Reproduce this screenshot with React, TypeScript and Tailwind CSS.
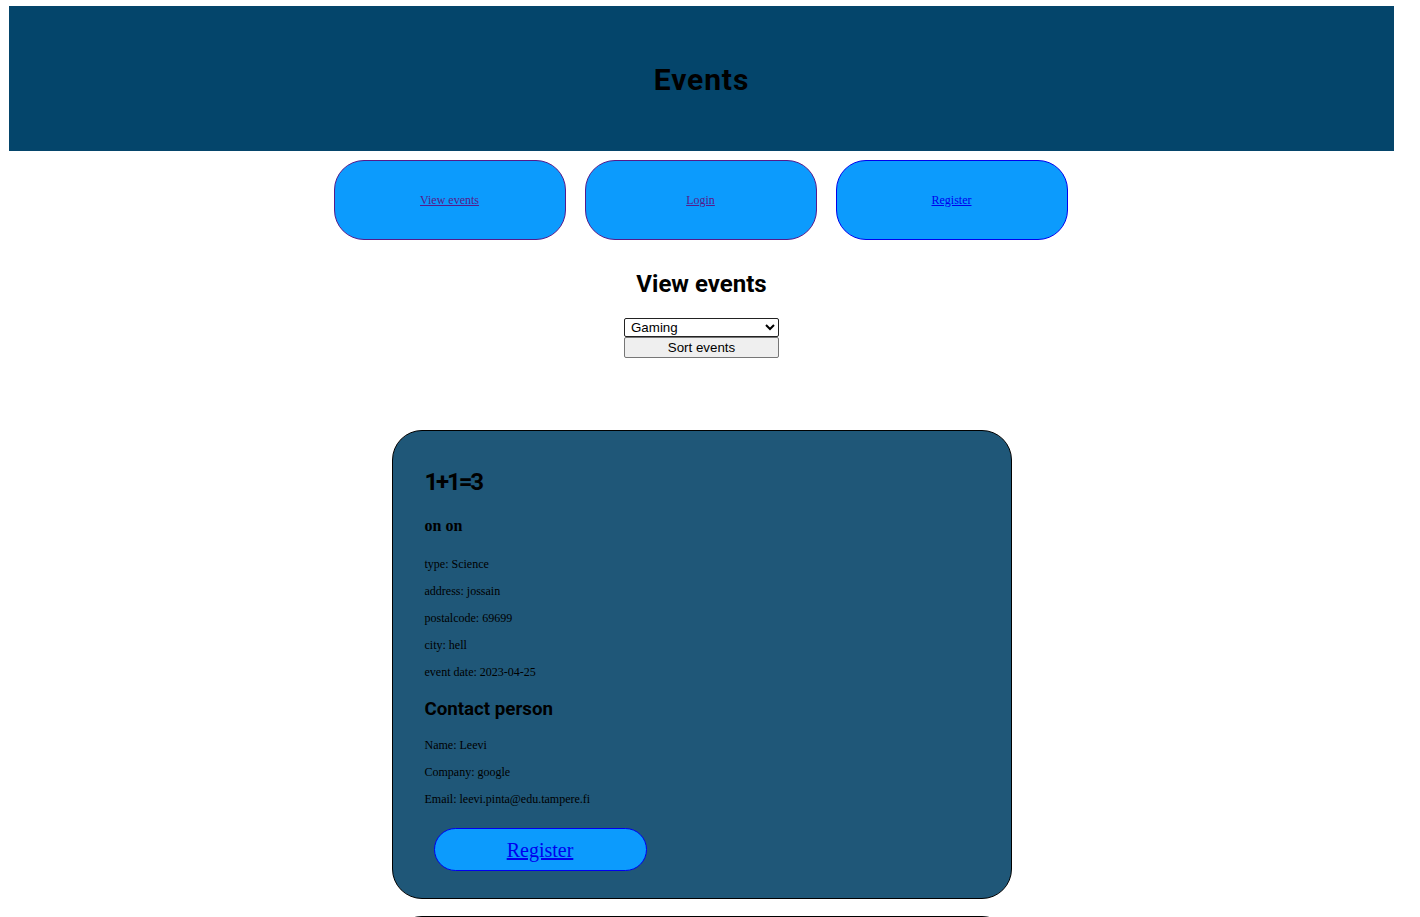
const navLinks: ReadonlyArray<{ label: string; visited: boolean }> = [
  { label: "View events", visited: true },
  { label: "Login", visited: true },
  { label: "Register", visited: false },
];

type EventItem = {
  title: string;
  subtitle: string;
  type: string;
  address: string;
  postalcode: string;
  city: string;
  date: string;
  name: string;
  company: string;
  email: string;
};

const events: ReadonlyArray<EventItem> = [
  {
    title: "1+1=3",
    subtitle: "on on",
    type: "Science",
    address: "jossain",
    postalcode: "69699",
    city: "hell",
    date: "2023-04-25",
    name: "Leevi",
    company: "google",
    email: "leevi.pinta@edu.tampere.fi",
  },
  {
    title: "LAN party",
    subtitle: "bring your own computer",
    type: "Gaming",
    address: "Kalevantie 4",
    postalcode: "33100",
    city: "Tampere",
    date: "2023-05-12",
    name: "Leevi",
    company: "google",
    email: "leevi.pinta@edu.tampere.fi",
  },
];

const heading = "font-['Roboto',sans-serif] font-bold text-black";

const EventCard = ({ ev }: { ev: EventItem }): JSX.Element => {
  const details = [
    `type: ${ev.type}`,
    `address: ${ev.address}`,
    `postalcode: ${ev.postalcode}`,
    `city: ${ev.city}`,
    `event date: ${ev.date}`,
  ];
  const contact = [`Name: ${ev.name}`, `Company: ${ev.company}`, `Email: ${ev.email}`];

  return (
    <div className="mx-auto w-[620px] rounded-[30px] border border-black bg-[#1f5778] pt-[37px] pb-[27px] pl-[32px] pr-[32px] text-black">
      <h2 className={`${heading} text-[24px] leading-[28px] tracking-[-0.09em]`}>{ev.title}</h2>
      <h4 className="mt-[21px] font-['Liberation_Serif',serif] text-[16px] leading-[18px] font-bold">
        {ev.subtitle}
      </h4>
      <div className="mt-[22px] flex flex-col gap-[13px] font-['Liberation_Serif',serif] text-[12px] leading-[14px]">
        {details.map((d) => (
          <p key={d}>{d}</p>
        ))}
      </div>
      <h3 className={`${heading} mt-[19px] text-[18.72px] leading-[22px]`}>Contact person</h3>
      <div className="mt-[18px] flex flex-col gap-[13px] font-['Liberation_Serif',serif] text-[12px] leading-[14px]">
        {contact.map((c) => (
          <p key={c}>{c}</p>
        ))}
      </div>
      <a
        href="#"
        className="mt-[22px] ml-[9px] flex h-[43px] w-[213px] items-center justify-center rounded-full border border-[#0000ee] bg-[#0c9bfd] font-['Liberation_Serif',serif] text-[20px] text-[#0000ee] underline"
      >
        Register
      </a>
    </div>
  );
};

const App = (): JSX.Element => {
  return (
    <div className="min-h-screen bg-white pl-[9px] pr-[26px] pt-[6px] pb-[40px]">
      <header className="flex h-[145px] items-center justify-center bg-[#04456b] pt-[3px]">
        <h1 className={`${heading} text-[30px] leading-[34px] tracking-[0.03em]`}>Events</h1>
      </header>

      <nav className="mt-[9px] flex justify-center gap-[19px] pr-[2px]">
        {navLinks.map((link) => (
          <div
            key={link.label}
            className={`flex h-[80px] w-[232px] items-center justify-center rounded-[30px] border bg-[#0c9bfd] ${
              link.visited ? "border-[#551a8b]" : "border-[#0000ee]"
            }`}
          >
            <a
              href="#"
              className={`font-['Liberation_Serif',serif] text-[12px] underline ${
                link.visited ? "text-[#551a8b]" : "text-[#0000ee]"
              }`}
            >
              {link.label}
            </a>
          </div>
        ))}
      </nav>

      <h2 className={`${heading} mt-[30px] text-center text-[24px] leading-[28px]`}>View events</h2>

      <div className="mt-[20px] flex flex-col items-center font-['Liberation_Sans',Arial,sans-serif] text-[13.33px] text-black">
        <select
          defaultValue="Gaming"
          className="h-[19px] w-[155px] rounded-[2px] border border-[#222] bg-white pl-[2px]"
        >
          <option>Gaming</option>
          <option>Science</option>
          <option>Music</option>
          <option>Sports</option>
        </select>
        <button
          type="button"
          className="h-[21px] w-[155px] rounded-[2px] border border-[#767676] bg-[#efefef] leading-[19px]"
        >
          Sort events
        </button>
      </div>

      <div className="mt-[72px] flex flex-col gap-[17px]">
        {events.map((ev) => (
          <EventCard key={ev.title} ev={ev} />
        ))}
      </div>
    </div>
  );
};

export default App;
